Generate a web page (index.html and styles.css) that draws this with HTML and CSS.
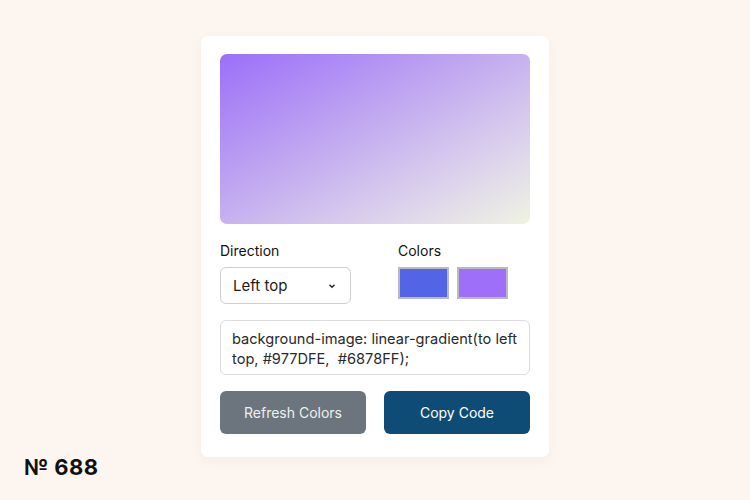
FILE: index.html
```html
<!DOCTYPE html>
<html>
<head>
<meta charset="utf-8">
<link rel="stylesheet" href="styles.css">
</head>
<body>
<div class="page">
  <div class="card">
    <div class="preview"></div>
    <div class="options">
      <div class="opt dir">
        <div class="label">Direction</div>
        <div class="select"><span>Left top</span>
          <svg width="10" height="10" viewBox="0 0 10 10"><path d="M2.5 3.8 L5 6.2 L7.5 3.8" fill="none" stroke="#222" stroke-width="1.4"/></svg>
        </div>
      </div>
      <div class="opt colors">
        <div class="label">Colors</div>
        <div class="swatches">
          <div class="swatch s1"></div>
          <div class="swatch s2"></div>
        </div>
      </div>
    </div>
    <div class="code">background-image: linear-gradient(to left top, #977DFE,&nbsp; #6878FF);</div>
    <div class="buttons">
      <div class="btn refresh">Refresh Colors</div>
      <div class="btn copy">Copy Code</div>
    </div>
  </div>
  <div class="num">№ 688</div>
</div>
</body>
</html>
```
FILE: styles.css
```css
* { box-sizing: border-box; }
html, body { margin: 0; padding: 0; }
body {
  width: 750px; height: 500px;
  background: #fdf6f0;
  font-family: Inter, "Noto Sans", sans-serif;
  color: #1c1c1c;
  overflow: hidden;
}
.page { position: relative; width: 750px; height: 500px; padding-top: 36px; }
.card {
  width: 348px;
  margin-left: 201px;
  height: 421px;
  background: #fff;
  border-radius: 7px;
  padding: 18px 19px;
  box-shadow: 0 4px 14px rgba(0,0,0,0.04);
}
.preview {
  height: 170px;
  border-radius: 7px;
  background: linear-gradient(to bottom right, #9b6ff9 0%, #c3abf0 45%, #dcd3ec 75%, #f0f3e2 100%);
}
.options { display: flex; margin-top: 18px; }
.opt.dir { width: 178px; }
.label { font-size: 14px; line-height: 18px; color: #111; }
.select {
  margin-top: 7px;
  width: 131px; height: 37px;
  border: 1px solid #cfcfcf;
  border-radius: 6px;
  display: flex; align-items: center; justify-content: space-between;
  padding: 0 13px 0 12px;
  font-size: 15px;
}
.swatches { display: flex; gap: 8px; margin-top: 7px; }
.swatch { width: 51px; height: 32px; border: 2px solid #b9b9bf; }
.s1 { background: #5464e6; }
.s2 { background: #9e6ff8; }
.code {
  margin-top: 16px;
  height: 55px;
  border: 1px solid #dcdcdc;
  border-radius: 6px;
  padding: 8px 3px 6px 11px;
  font-size: 14.6px;
  line-height: 20px;
  color: #2a2a2a;
}
.buttons { display: flex; justify-content: space-between; margin-top: 16px; }
.btn {
  width: 146px; height: 43px;
  border-radius: 6px;
  display: flex; align-items: center; justify-content: center;
  font-size: 14px; color: #fff;
}
.refresh { background: #6c757d; color: #eef0f2; }
.copy { background: #0f4c75; }
.num {
  position: absolute; left: 24px; top: 454px;
  font-size: 22px; font-weight: 700; color: #111;
  letter-spacing: 0.4px;
}
```
